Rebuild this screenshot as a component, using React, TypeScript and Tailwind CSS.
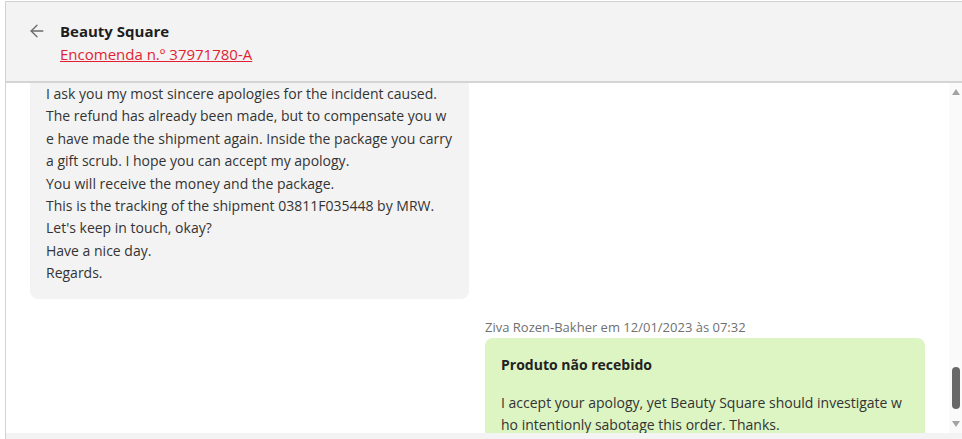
import React from "react";

const grayLines = [
  "I ask you my most sincere apologies for the incident caused.",
  "The refund has already been made, but to compensate you w",
  "e have made the shipment again. Inside the package you carry",
  "a gift scrub. I hope you can accept my apology.",
  "You will receive the money and the package.",
  "This is the tracking of the shipment 03811F035448 by MRW.",
  "Let's keep in touch, okay?",
  "Have a nice day.",
  "Regards.",
];

export default function App() {
  return (
    <div className="w-[962px] h-[439px] bg-white pt-px pl-[5px] font-['Open_Sans',sans-serif] text-[#333333] overflow-hidden">
      <div className="h-full flex flex-col border-l border-t border-[#d2d2d2]">
        {/* Header */}
        <div className="h-[81px] shrink-0 bg-[#f3f3f3] border-b-2 border-[#d4d4d4] flex items-start pl-[21px] pt-[18px] gap-[13px]">
          <div className="h-[22px] flex items-center">
            <svg width="20" height="20" viewBox="0 0 24 24" fill="none" stroke="#6b6b6b" strokeWidth="1.6" strokeLinecap="round" strokeLinejoin="round">
              <path d="M19 12H5" />
              <path d="M12 19l-7-7 7-7" />
            </svg>
          </div>
          <div className="flex flex-col">
            <div className="text-[15px] leading-[22px] font-bold text-[#1e1e1e]">Beauty Square</div>
            <a className="mt-px text-[15px] leading-[22px] text-[#e21f32] underline">Encomenda n.º 37971780-A</a>
          </div>
        </div>

        {/* Body */}
        <div className="flex-1 flex overflow-hidden min-h-0">
          <div className="flex-1 overflow-hidden px-6">
            <div className="-mt-4">
              <div className="w-[439px] bg-[#f3f3f3] rounded-lg px-4 pt-4 pb-[14px] text-[14px] leading-[1.6]">
                {grayLines.map((l, i) => (
                  <div key={i} className="whitespace-nowrap">{l}</div>
                ))}
              </div>
              <div className="flex flex-col items-end mt-5">
                <div className="w-[440px]">
                  <div className="text-[13px] leading-4 text-[#707070]">Ziva Rozen-Bakher em 12/01/2023 às 07:32</div>
                  <div className="mt-[3px] bg-[#ddf4c3] rounded-lg px-4 pt-4 pb-4 text-[14px] leading-[1.6]">
                    <div className="font-bold text-[#222222] mb-4">Produto não recebido</div>
                    <div className="whitespace-nowrap">I accept your apology, yet Beauty Square should investigate w</div>
                    <div className="whitespace-nowrap">ho intentionly sabotage this order. Thanks.</div>
                  </div>
                </div>
              </div>
            </div>
          </div>
          {/* Scrollbar */}
          <div className="w-[13px] shrink-0 bg-[#fafafa] flex flex-col items-center">
            <div className="mt-[6px] w-0 h-0 border-l-[4px] border-r-[4px] border-b-[6px] border-l-transparent border-r-transparent border-b-[#a3a3a3]" />
            <div className="flex-1" />
            <div className="w-[8px] h-[42px] rounded-full bg-[#686868]" />
            <div className="mt-[12px] mb-[6px] w-0 h-0 border-l-[4px] border-r-[4px] border-t-[6px] border-l-transparent border-r-transparent border-t-[#a3a3a3]" />
          </div>
        </div>

        {/* Footer strip */}
        <div className="h-[6px] shrink-0 bg-[#f3f3f3]" />
      </div>
    </div>
  );
}
